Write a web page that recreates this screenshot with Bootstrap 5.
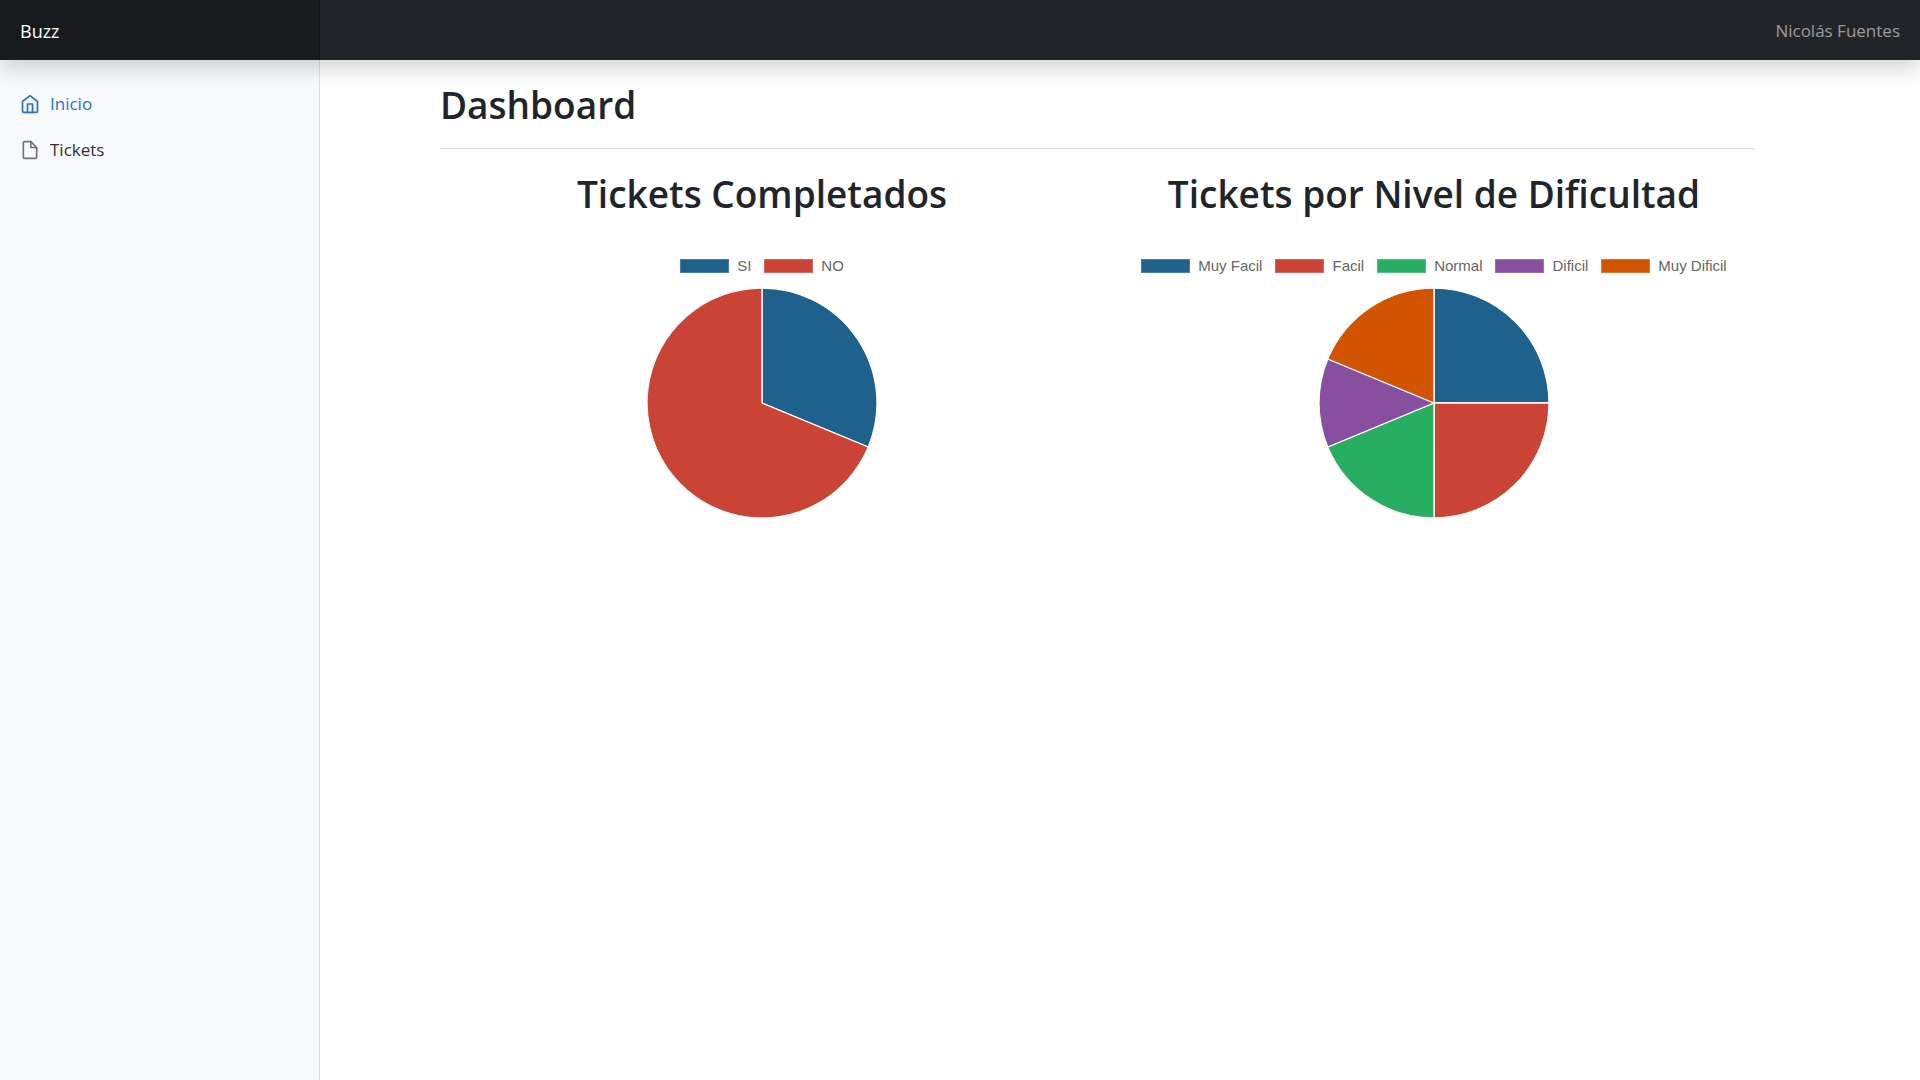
<!DOCTYPE html>
<html lang="es">
<head>
<meta charset="utf-8">
<meta name="viewport" content="width=device-width, initial-scale=1">
<title>Buzz - Dashboard</title>
<link href="https://cdn.jsdelivr.net/npm/bootstrap@5.3.0/dist/css/bootstrap.min.css" rel="stylesheet">
<style>
  body { font-family: "Open Sans", "Noto Sans", sans-serif; font-size: 17px; line-height: 26px; color: #212529; background: #fff; }
  .topbar { height: 60px; background: #212529; box-shadow: 0 10px 20px rgba(0,0,0,.15); z-index: 10; }
  .topbar a { padding: 2px 20px 0; }
  .brand-link { font-size: 18px; color: #fff; background: rgba(0,0,0,.25); box-shadow: inset -1px 0 0 rgba(0,0,0,.25); }
  .brand-link:hover { color: #fff; }
  .user-link { color: rgba(255,255,255,.55); }
  .shell { min-height: calc(100vh - 60px); }
  .side { padding-top: 21px; background: #f8f9fb; box-shadow: inset -1px 0 0 rgba(0,0,0,.1); }
  .side .nav-link { gap: 10px; padding: 10px 20px; font-weight: 500; color: #333; }
  .side .nav-link svg { color: #727272; }
  .side .nav-link.active, .side .nav-link.active svg { color: #2470dc; }
  .icon-line { width: 20px; height: 20px; fill: none; stroke: currentColor; stroke-width: 2; stroke-linecap: round; stroke-linejoin: round; }
  .content { padding: 21px 150px 0 106px; }
  .page-head { margin: 0 15px 21px 14px; padding-bottom: 11px; }
  h1 { font-size: 37px; line-height: 48px; font-weight: 600; }
  .legend-list { gap: 13px; margin-top: 30px; font: 15px/20px "Liberation Sans", Arial, sans-serif; color: #666; }
  .legend-list li { gap: 8px; }
  .swatch { width: 49px; height: 14px; border: 1px solid rgba(255,255,255,.2); }
  .pie { width: 230px; height: 230px; margin-top: 12px; stroke: #fff; stroke-width: 1.3; stroke-linejoin: round; }
  .c-blue { background: #1f618d; fill: #1f618d; }
  .c-red { background: #cb4335; fill: #cb4335; }
  .c-green { background: #28ae60; fill: #28ae60; }
  .c-purple { background: #884ea0; fill: #884ea0; }
  .c-orange { background: #d35400; fill: #d35400; }
</style>
</head>
<body>
<header class="topbar d-flex justify-content-between position-relative">
  <a class="brand-link col-2 d-flex align-items-center text-decoration-none" href="#">Buzz</a>
  <a class="user-link d-flex align-items-center text-decoration-none" href="#">Nicolás Fuentes</a>
</header>
<div class="shell d-flex">
  <nav class="side col-2" aria-label="Menú">
    <ul class="nav flex-column">
      <li class="nav-item"><a class="nav-link active d-flex align-items-center" aria-current="page" href="#">
        <svg class="icon-line" viewBox="0 0 24 24" aria-hidden="true"><path d="M3 9l9-7 9 7v11a2 2 0 0 1-2 2H5a2 2 0 0 1-2-2z"/><polyline points="9 22 9 12 15 12 15 22"/></svg>Inicio</a></li>
      <li class="nav-item"><a class="nav-link d-flex align-items-center" href="#">
        <svg class="icon-line" viewBox="0 0 24 24" aria-hidden="true"><path d="M13 2H6a2 2 0 0 0-2 2v16a2 2 0 0 0 2 2h12a2 2 0 0 0 2-2V9z"/><polyline points="13 2 13 9 20 9"/></svg>Tickets</a></li>
    </ul>
  </nav>
  <main class="content col-10">
    <div class="page-head border-bottom"><h1>Dashboard</h1></div>
    <div class="row g-0">
      <section class="col-6 d-flex flex-column align-items-center">
        <h1>Tickets Completados</h1>
        <ul class="legend-list list-unstyled d-flex mb-0">
          <li class="d-flex align-items-center"><span class="swatch c-blue"></span>SI</li>
          <li class="d-flex align-items-center"><span class="swatch c-red"></span>NO</li>
        </ul>
        <svg class="pie" viewBox="-115 -115 230 230" role="img" aria-label="Tickets Completados">
          <path class="c-blue" d="M0 0V-115A115 115 0 0 1 106.25 44.01Z"/>
          <path class="c-red" d="M0 0L106.25 44.01A115 115 0 1 1 0 -115Z"/>
        </svg>
      </section>
      <section class="col-6 d-flex flex-column align-items-center">
        <h1>Tickets por Nivel de Dificultad</h1>
        <ul class="legend-list list-unstyled d-flex mb-0">
          <li class="d-flex align-items-center"><span class="swatch c-blue"></span>Muy Facil</li>
          <li class="d-flex align-items-center"><span class="swatch c-red"></span>Facil</li>
          <li class="d-flex align-items-center"><span class="swatch c-green"></span>Normal</li>
          <li class="d-flex align-items-center"><span class="swatch c-purple"></span>Dificil</li>
          <li class="d-flex align-items-center"><span class="swatch c-orange"></span>Muy Dificil</li>
        </ul>
        <svg class="pie" viewBox="-115 -115 230 230" role="img" aria-label="Tickets por Nivel de Dificultad">
          <path class="c-blue" d="M0 0V-115A115 115 0 0 1 115 0Z"/>
          <path class="c-red" d="M0 0H115A115 115 0 0 1 0 115Z"/>
          <path class="c-green" d="M0 0V115A115 115 0 0 1 -106.25 44.01Z"/>
          <path class="c-purple" d="M0 0L-106.25 44.01A115 115 0 0 1 -106.25 -44.01Z"/>
          <path class="c-orange" d="M0 0L-106.25 -44.01A115 115 0 0 1 0 -115Z"/>
        </svg>
      </section>
    </div>
  </main>
</div>
<script src="https://cdn.jsdelivr.net/npm/bootstrap@5.3.0/dist/js/bootstrap.bundle.min.js"></script>
</body>
</html>
